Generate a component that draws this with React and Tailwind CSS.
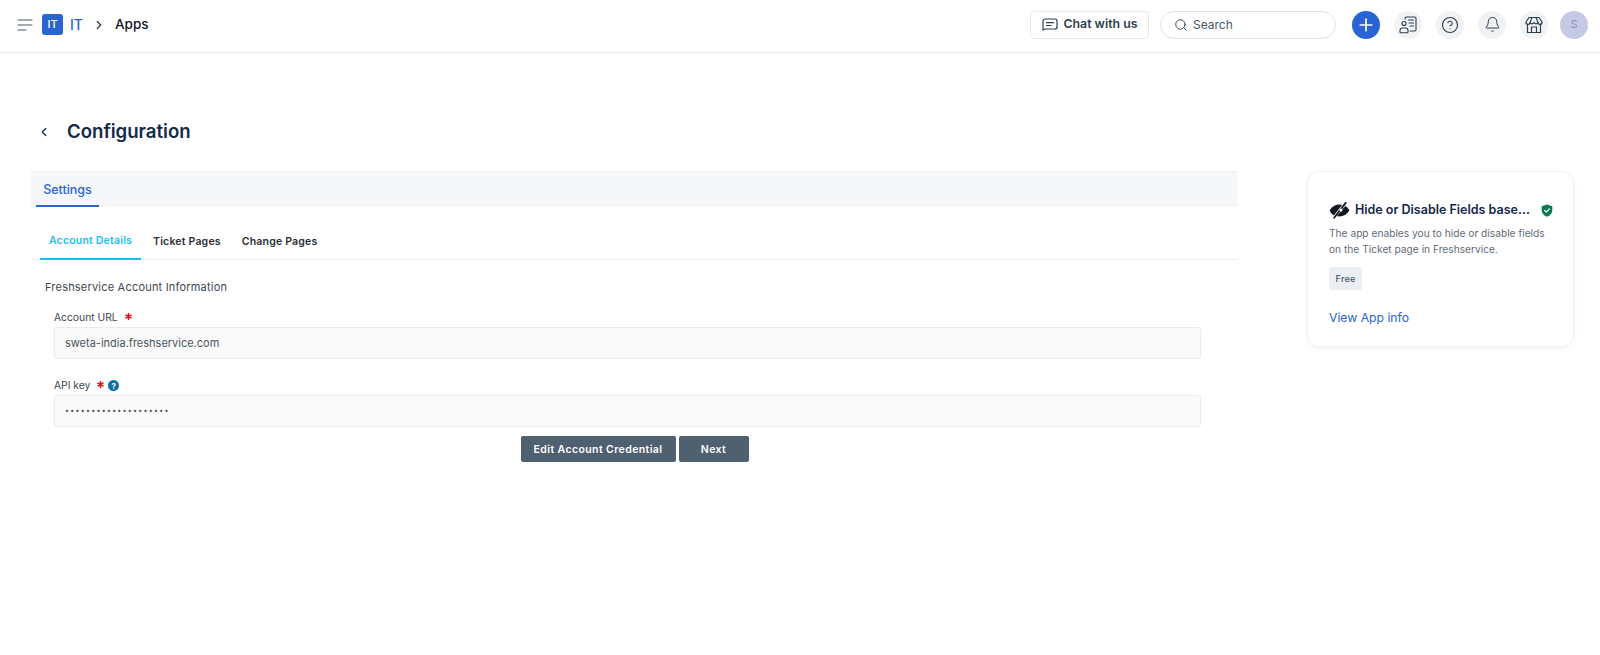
import React from "react";
import { ChevronRight, ChevronLeft, Search, Plus, CircleHelp, Bell } from "lucide-react";

const font = { fontFamily: "Inter, 'Noto Sans', sans-serif" };

const MenuIcon = () => (
  <svg width="16" height="12" viewBox="0 0 16 12" fill="none" stroke="#475867" strokeWidth="1.100" strokeLinecap="round">
    <path d="M1 1h14M1 6h14M1 11h8" />
  </svg>
);

const ChatIcon = () => (
  <svg width="16" height="13" viewBox="0 0 16 13" fill="none" stroke="#2c3e50" strokeWidth="1.2" strokeLinecap="round" strokeLinejoin="round">
    <path d="M3 1h10a2 2 0 0 1 2 2v6a2 2 0 0 1-2 2H3.5L1 12V3a2 2 0 0 1 2-2z" />
    <path d="M4.5 4.7h7M4.5 7.5h4.5" />
  </svg>
);

const ContactIcon = () => (
  <svg width="18" height="18" viewBox="0 0 18 18" fill="none" stroke="#2c3e50" strokeWidth="1.1" strokeLinecap="round" strokeLinejoin="round">
    <path d="M6 3V2.5A1.5 1.5 0 0 1 7.500 1h8A1.500 1.500 0 0 1 17 2.500v11a1.500 1.500 0 0 1-1.500 1.500H11" />
    <circle cx="5" cy="7.500" r="2" />
    <path d="M1 16v-1.500A2.500 2.500 0 0 1 3.500 12h3A2.500 2.500 0 0 1 9 14.500V16a.8.8 0 0 1-.8.8H1.800A.8.8 0 0 1 1 16z" />
    <path d="M9.500 4h5M10 7h4.500M11 10h3.500" />
  </svg>
);

const StoreIcon = () => (
  <svg width="18" height="18" viewBox="0 0 18 18" fill="none" stroke="#2c3e50" strokeWidth="1.2" strokeLinecap="round" strokeLinejoin="round">
    <path d="M4 1.500h10l3 4.500a2 2 0 0 1-4 .6 2.200 2.200 0 0 1-4 0 2.200 2.200 0 0 1-4 0 2 2 0 0 1-4-.6z" />
    <path d="M7 1.500 5 6.600M11 1.500l2 5.100" />
    <path d="M2.500 8.500V16.500h13V8.500" />
    <path d="M6.500 16.500V11h5v5.500" />
  </svg>
);

const EyeOffIcon = () => (
  <svg width="21" height="17" viewBox="0 0 21 17">
    <path d="M.5 8.500C3 4.500 6.500 2.500 10.500 2.500c1.200 0 2.300.2 3.300.5L5 13.500C3.200 12.500 1.700 10.700.5 8.500z" fill="#12181f" />
    <path d="M20.500 8.500c-2.500 4-6 6-10 6-1 0-2-.1-2.900-.4L16.400 4c1.700 1 3 2.500 4.100 4.500z" fill="#12181f" />
    <path d="M16.500 .8 5 15.800" stroke="#fff" strokeWidth="2.600" />
    <path d="M16.800 .8 5.200 15.800" stroke="#12181f" strokeWidth="1.800" strokeLinecap="round" />
    <circle cx="12" cy="8" r="1.600" fill="#fff" />
  </svg>
);

const ShieldIcon = () => (
  <svg width="12" height="13" viewBox="0 0 12 13">
    <path d="M6 .5 11.300 2.300V6.300C11.300 9.500 9 11.700 6 12.700 3 11.700.7 9.500.7 6.300V2.300z" fill="#0b7a55" />
    <path d="M3.700 6.500 5.300 8 8.400 4.900" fill="none" stroke="#fff" strokeWidth="1.200" strokeLinecap="round" strokeLinejoin="round" />
  </svg>
);

const RoundIcon = ({ children }) => (
  <div className="flex h-[28px] w-[28px] items-center justify-center rounded-full bg-[#f0f2f4]">{children}</div>
);

const Required = () => (
  <svg width="7" height="7" viewBox="0 0 8 8" className="ml-[7px] -mt-[3px]" stroke="#d8101c" strokeWidth="1.800" strokeLinecap="round">
    <path d="M4 .8v6.400M1.200 2.400l5.600 3.200M6.800 2.400 1.200 5.600" />
  </svg>
);

const Field = ({ label, value, help }) => (
  <div>
    <div className="flex h-[17px] items-center text-[10.300px] text-[#3d4650]">
      {label}
      <Required />
      {help && (
        <span className="ml-[4px] flex h-[11px] w-[11px] items-center justify-center rounded-full bg-[#0f6ea8] text-[8px] font-bold text-white">?</span>
      )}
    </div>
    <div className="mt-[1px] flex h-[32px] items-center rounded-[3px] border border-[#e9ebed] bg-[#fafafa] px-[10px] pt-[1px] text-[11px] text-[#4a5560]">
      {value}
    </div>
  </div>
);

export default function App() {
  return (
    <div className="h-[655px] w-[1600px] overflow-hidden bg-white" style={font}>
      <header className="flex h-[53px] items-center justify-between border-b border-[#e6eaee] pr-[12px] pb-[3px] pl-[17px]">
        <div className="flex items-center">
          <MenuIcon />
          <div className="ml-[9px] flex h-[21px] w-[21px] items-center justify-center rounded-[3px] bg-[#2a63d4] text-[11px] font-medium text-white">IT</div>
          <span className="ml-[7px] text-[14px] font-medium text-[#2a63d4]">IT</span>
          <ChevronRight size={14} strokeWidth={2.200} className="ml-[9px] text-[#2c3e50]" />
          <span className="ml-[9px] text-[13.500px] font-medium text-[#12181f]">Apps</span>
        </div>
        <div className="flex items-center">
          <button className="flex h-[28px] w-[119px] items-center justify-center gap-[6px] rounded-[4px] border border-[#e6eaee] text-[12.300px] font-semibold text-[#2c3e50]">
            <ChatIcon />
            Chat with us
          </button>
          <div className="ml-[11px] flex h-[28px] w-[176px] items-center gap-[5px] rounded-full border border-[#dfe3e8] pl-[13px] text-[12px] text-[#475867]">
            <Search size={14} strokeWidth={1.600} className="text-[#2c3e50]" />
            Search
          </div>
          <div className="ml-[16px] flex h-[28px] w-[28px] items-center justify-center rounded-full bg-[#2a63d4]">
            <Plus size={20} strokeWidth={2} className="text-white" />
          </div>
          <div className="ml-[14px] flex items-center gap-[14px]">
            <RoundIcon><ContactIcon /></RoundIcon>
            <RoundIcon><CircleHelp size={18} strokeWidth={1.500} className="text-[#2c3e50]" /></RoundIcon>
            <RoundIcon><Bell size={17} strokeWidth={1.400} className="text-[#2c3e50]" /></RoundIcon>
            <RoundIcon><StoreIcon /></RoundIcon>
          </div>
          <div className="ml-[12px] flex h-[28px] w-[28px] items-center justify-center rounded-full bg-[#c5c9e6] text-[11px] text-[#8d92b5]">S</div>
        </div>
      </header>

      <main className="flex pt-[61px] pr-[26px] pl-[31px]">
        <section className="flex-1">
          <div className="flex h-[36px] items-center pl-[6px]">
            <ChevronLeft size={14} strokeWidth={2.400} className="text-[#12344d]" />
            <h1 className="ml-[16px] text-[18.600px] font-semibold text-[#12294a]">Configuration</h1>
          </div>
          <div className="mt-[21px] w-[1207px]">
            <div className="h-[36px] border-t border-[#eef0f3] bg-[#f5f7f9] pl-[5px]">
              <div className="flex h-[35px] w-[63px] items-center justify-center border-b-2 border-[#2a63d4] pt-[3px] text-[12.500px] font-medium text-[#2a63d4]">Settings</div>
            </div>
            <div className="mt-[17px] flex h-[36px] border-b border-[#eef0f3] pl-[9px] text-[10.500px] font-semibold tracking-[0.2px]">
              <div className="flex h-[36px] w-[101px] items-center justify-center border-b-2 border-[#1ebcf6] text-[#1ebcf6]">Account Details</div>
              <div className="ml-[12px] flex items-center text-[#2a2f35]">Ticket Pages</div>
              <div className="ml-[21px] flex items-center text-[#2a2f35]">Change Pages</div>
            </div>
            <p className="mt-[19px] pl-[14px] text-[11px] leading-[16px] tracking-[0.2px] text-[#3d4650]">Freshservice Account Information</p>
            <div className="mt-[14px] w-[1170px] pl-[23px]">
              <Field label="Account URL" value="sweta-india.freshservice.com" />
              <div className="mt-[18px]">
                <Field label="API key" help value={<span className="text-[7px] tracking-[1.300px]">••••••••••••••••••••</span>} />
              </div>
            </div>
            <div className="mt-[9px] flex w-[1171px] justify-center gap-[3px] pl-[36px] text-[10.500px] font-semibold tracking-[0.4px] text-white">
              <button className="h-[26px] w-[155px] rounded-[2px] bg-[#4f6071] pt-[1px]">Edit Account Credential</button>
              <button className="h-[26px] w-[70px] rounded-[2px] bg-[#4f6071] pt-[1px]">Next</button>
            </div>
          </div>
        </section>
        <aside className="mt-[57px] h-[176px] w-[267px] rounded-[12px] border border-[#f0f2f4] bg-white pt-[29px] pr-[20px] pl-[21px] shadow-[0_2px_6px_rgba(18,52,77,0.05)]">
          <div className="flex items-center">
            <EyeOffIcon />
            <span className="ml-[5px] w-[180px] text-[12.500px] font-semibold whitespace-nowrap text-[#12294a]">Hide or Disable Fields base...</span>
            <span className="ml-[7px]"><ShieldIcon /></span>
          </div>
          <p className="mt-[5px] text-[10.200px] leading-[16px] text-[#5f6b78]">
            The app enables you to hide or disable fields on the Ticket page in Freshservice.
          </p>
          <div className="mt-[10px] flex h-[23px] w-[33px] items-center justify-center rounded-[3px] bg-[#ebeff3] text-[9px] font-medium tracking-[0.2px] text-[#475867]">Free</div>
          <a className="mt-[19px] block text-[12.200px] text-[#2a63d4]">View App info</a>
        </aside>
      </main>
    </div>
  );
}
